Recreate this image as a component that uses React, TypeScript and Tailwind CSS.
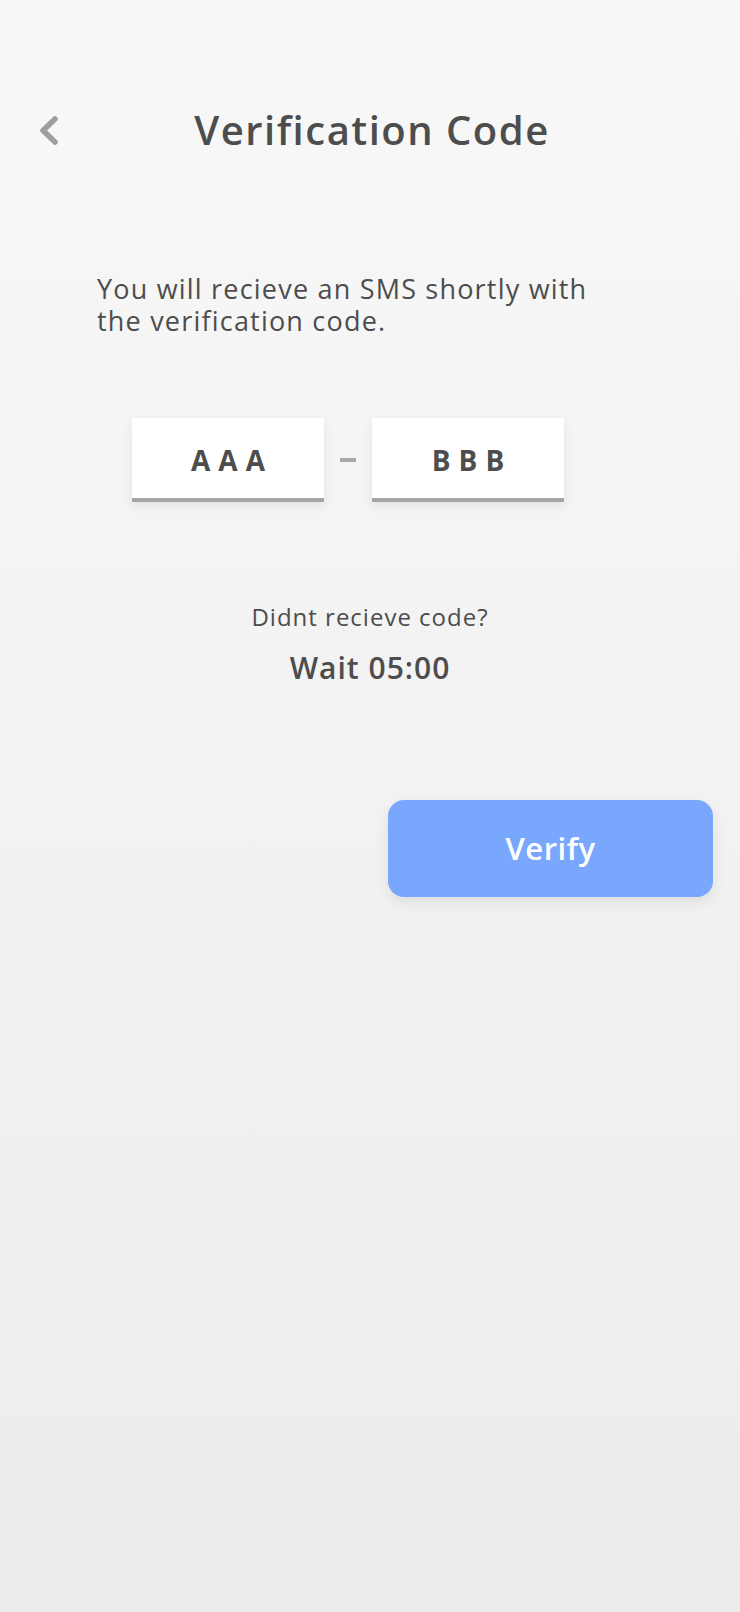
export default function App() {
  const font = { fontFamily: '"Open Sans", "Noto Sans", sans-serif' };
  return (
    <div
      style={font}
      className="min-h-[1612px] w-full bg-gradient-to-b from-[#f8f8f8] to-[#ececec] pt-[100px] text-[#4d4d4d]"
    >
      <div className="grid h-[60px] grid-cols-[1fr_auto_1fr] items-center">
        <div className="pl-[40px]">
          <svg width="18" height="29" viewBox="0 0 18 29" fill="none">
            <polyline
              points="15,3 3,14.5 15,26"
              stroke="#9e9e9e"
              strokeWidth="5.5"
              strokeLinecap="round"
              strokeLinejoin="round"
            />
          </svg>
        </div>
        <h1 className="pl-[4px] text-[40px] font-semibold leading-none tracking-[1.5px]">
          Verification Code
        </h1>
        <div />
      </div>

      <p className="ml-[97px] mt-[113px] w-[520px] text-[27px] leading-[32px] tracking-[1.2px]">
        You will recieve an SMS shortly with the verification code.
      </p>

      <div className="ml-[132px] mt-[81px] flex items-center gap-4">
        <div className="flex h-[84px] w-[192px] items-center justify-center border-b-4 border-[#a5a5a5] bg-white pl-[8px] pt-1 text-[28px] font-bold tracking-[8px] shadow-[0_4px_10px_rgba(0,0,0,0.08)]">
          AAA
        </div>
        <div className="h-[4px] w-4 bg-[#a8a8a8]" />
        <div className="flex h-[84px] w-[192px] items-center justify-center border-b-4 border-[#a5a5a5] bg-white pl-[8px] pt-1 text-[28px] font-bold tracking-[8px] shadow-[0_4px_10px_rgba(0,0,0,0.08)]">
          BBB
        </div>
      </div>

      <p className="mt-[100px] text-center text-[24px] leading-[30px] tracking-[1px]">
        Didnt recieve code?
      </p>
      <p className="mt-[18px] text-center text-[30px] font-semibold leading-[36px] tracking-[1px]">
        Wait 05:00
      </p>

      <button className="ml-[388px] mt-[114px] flex h-[97px] w-[325px] items-center justify-center rounded-[16px] bg-[#78a7fd] text-[31px] font-semibold tracking-[0.5px] text-white shadow-[0_6px_14px_rgba(0,0,0,0.08)]">
        Verify
      </button>
    </div>
  );
}
